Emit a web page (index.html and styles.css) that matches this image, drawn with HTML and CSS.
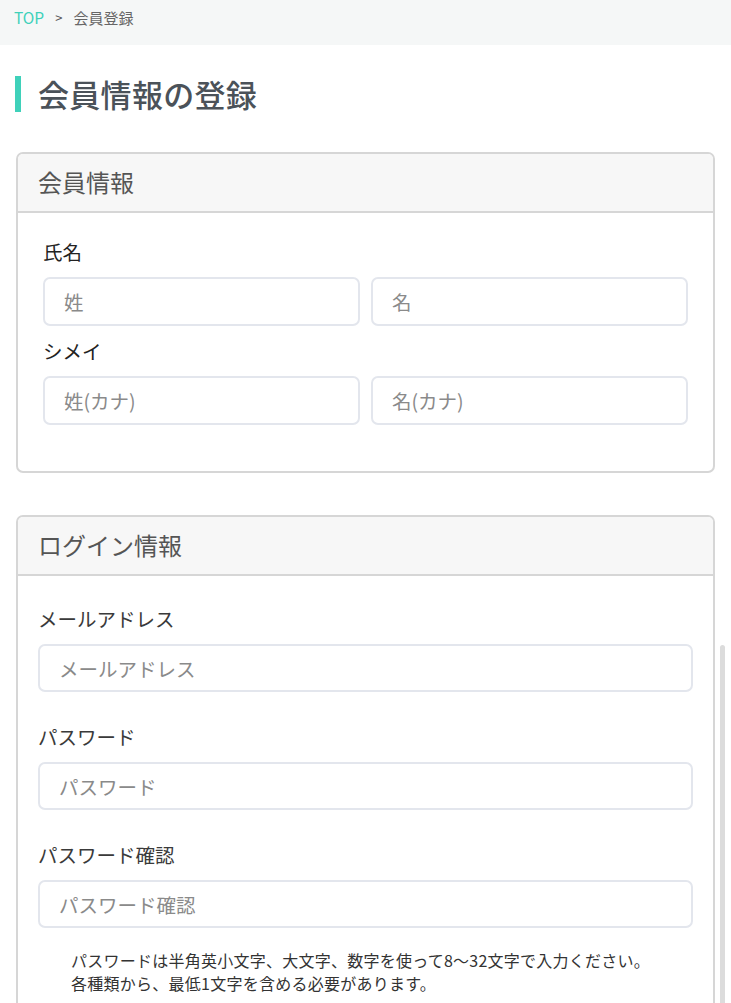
FILE: index.html
```html
<!DOCTYPE html>
<html lang="ja">
<head>
<meta charset="utf-8">
<title>会員情報の登録</title>
<link rel="stylesheet" href="styles.css">
</head>
<body>
<nav class="breadcrumb">
  <a class="crumb-link" href="#">TOP</a>
  <span class="crumb-sep">&gt;</span>
  <span class="crumb-current">会員登録</span>
</nav>
<main class="page">
  <h1 class="page-title">会員情報の登録</h1>

  <section class="card">
    <div class="card-header">会員情報</div>
    <div class="card-body card-body-member">
      <label class="label-dark">氏名</label>
      <div class="input-row">
        <input class="input" type="text" placeholder="姓">
        <input class="input" type="text" placeholder="名">
      </div>
      <label class="label-dark label-next">シメイ</label>
      <div class="input-row">
        <input class="input" type="text" placeholder="姓(カナ)">
        <input class="input" type="text" placeholder="名(カナ)">
      </div>
    </div>
  </section>

  <section class="card card-login">
    <div class="card-header">ログイン情報</div>
    <div class="card-body card-body-login">
      <label class="label">メールアドレス</label>
      <input class="input input-full" type="email" placeholder="メールアドレス">
      <label class="label label-gap">パスワード</label>
      <input class="input input-full" type="password" placeholder="パスワード">
      <label class="label label-gap">パスワード確認</label>
      <input class="input input-full" type="password" placeholder="パスワード確認">
      <p class="note">パスワードは半角英小文字、大文字、数字を使って8〜32文字で入力ください。<br>各種類から、最低1文字を含める必要があります。</p>
    </div>
  </section>
</main>
<div class="scroll-thumb"></div>
</body>
</html>
```
FILE: styles.css
```css
* { box-sizing: border-box; }
html, body { margin: 0; padding: 0; }
body {
  font-family: "Noto Sans CJK JP", "Noto Sans", sans-serif;
  background: #ffffff;
  color: #333;
  overflow: hidden;
  height: 1003px;
  position: relative;
}
.breadcrumb {
  height: 45px;
  background: #f5f7f7;
  display: flex;
  align-items: center;
  padding: 0 0 11px 14px;
  font-size: 15px;
}
.crumb-link { color: #3fd1ba; text-decoration: none; font-size: 15.5px; }
.crumb-sep { color: #555; margin: 0 11px; font-size: 13px; }
.crumb-current { color: #666; }

.page { padding: 0 16px; }
.page-title {
  margin: 31px 0 0 -1px;
  border-left: 6px solid #3fd1ba;
  padding-left: 17px;
  font-size: 31px;
  font-weight: 500;
  color: #4b5259;
  line-height: 36px;
  height: 36px;
  letter-spacing: 0.3px;
}
.card {
  margin-top: 40px;
  border: 2px solid #d6d6d6;
  border-radius: 7px;
  overflow: hidden;
}
.card-login { margin-top: 42px; }
.card-header {
  background: #f7f7f7;
  border-bottom: 2px solid #d6d6d6;
  height: 59px;
  display: flex;
  align-items: center;
  padding-left: 20px;
  font-size: 24px;
  color: #555;
  padding-bottom: 2px;
}
.card-body-member { padding: 24px 25px 46px 25px; }
.card-body-login { padding: 28px 20px 60px 20px; }
.label, .label-dark {
  display: block;
  font-size: 19.5px;
  line-height: 30px;
}
.label-dark { color: #222; }
.label { color: #3a3a3a; }
.label-next { margin-top: 10px; }
.label-gap { margin-top: 30px; }
.input-row {
  display: flex;
  gap: 11px;
  margin-top: 10px;
}
.input {
  flex: 1;
  min-width: 0;
  height: 49px;
  border: 2px solid #e3e6ed;
  border-radius: 7px;
  padding: 0 19px;
  font-family: "Noto Sans CJK JP", "Noto Sans", sans-serif;
  font-size: 19.5px;
  color: #333;
  background: #fff;
  outline: none;
}
.input::placeholder { color: #8a8a8a; }
.input-full {
  display: block;
  width: 100%;
  margin-top: 10px;
  height: 48px;
}
.note {
  margin: 21px 0 0 33px;
  font-size: 16px;
  line-height: 23px;
  color: #333;
  letter-spacing: 0.25px;
}
.scroll-thumb {
  position: absolute;
  left: 720px;
  top: 645px;
  width: 5px;
  height: 370px;
  border-radius: 3px;
  background: #dcdcdc;
}
```
